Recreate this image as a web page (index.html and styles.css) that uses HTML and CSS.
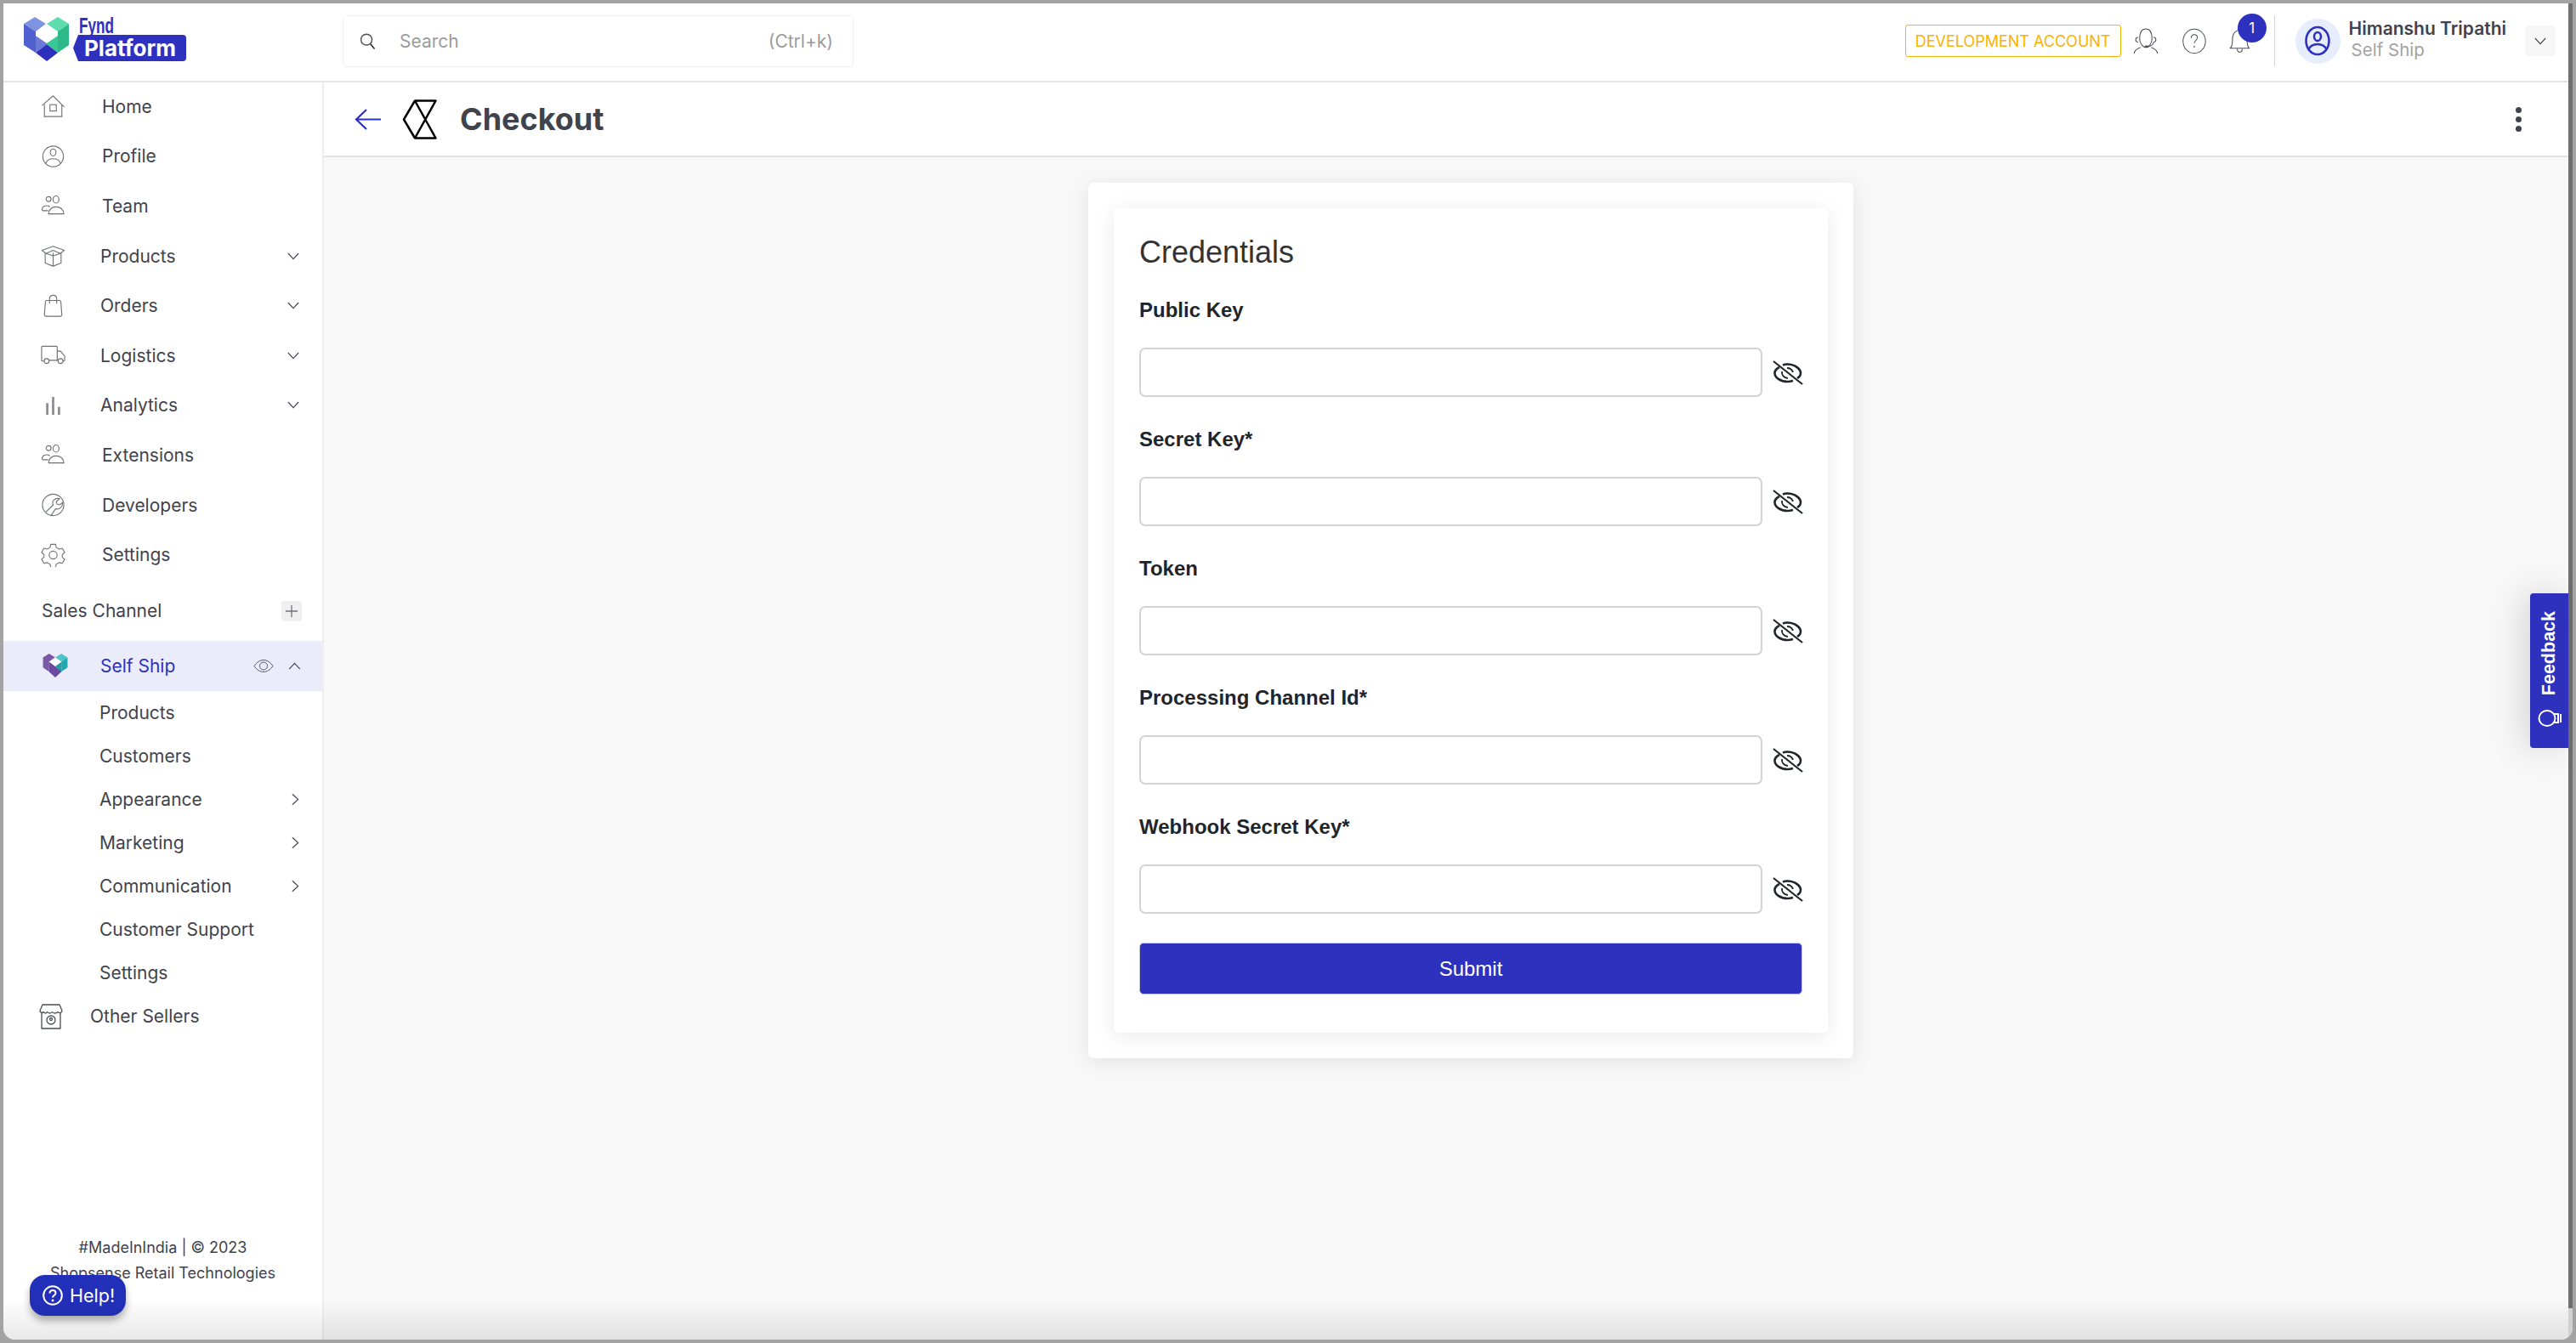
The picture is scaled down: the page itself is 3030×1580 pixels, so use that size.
FILE: index.html
```html
<!DOCTYPE html>
<html lang="en">
<head>
<meta charset="utf-8">
<title>Checkout</title>
<link rel="stylesheet" href="styles.css">
</head>
<body>
<svg class="defs" width="0" height="0" aria-hidden="true">
  <defs>
    <symbol id="people" viewBox="0 0 30 26"><g fill="none" stroke="currentColor" stroke-width="1.2"><circle cx="9.5" cy="5" r="3"/><ellipse cx="18.5" cy="5.5" rx="3.6" ry="4.4"/><path d="M2 19c-1.500-3 1-6 5-6 1.800 0 3 .4 4 1.300M2 19h7M9.500 23c0-5 3.500-8.500 9-8.500s9.500 3.500 9.500 8.500z"/></g></symbol>
    <symbol id="eye-off" viewBox="0 0 36 30"><g fill="none" stroke="#212529" stroke-width="2.600"><path d="M1 2l34 27" stroke-width="2.200"/><path d="M8 9C4 11 2.500 14 2.500 16 2.500 21 9 26 17.500 26c2.500 0 4.500-.5 6.500-1"/><path d="M12 6.500c2-.8 4-1 5.500-1C26 5.500 33 11 33 16c0 2-1.500 4.500-4 6"/><path d="M11 14c-.5 4 2 7.500 7 8M17 10c3 0 6 2 7 5" stroke-width="1.800"/></g></symbol>
    <symbol id="chev-down" viewBox="0 0 16 10"><path d="M1 1l7 7.500L15 1" fill="none" stroke="currentColor" stroke-width="1.300"/></symbol>
    <symbol id="chev-right" viewBox="0 0 10 16"><path d="M1 1l7.500 7L1 15" fill="none" stroke="currentColor" stroke-width="1.300"/></symbol>
  </defs>
</svg>
<div class="window">
  <div class="app">
    <header class="topbar">
      <div class="brand">
        <svg class="brand-mark" viewBox="0 0 54 53" aria-hidden="true">
          <path d="M13 0L26 8 14 17 0 8z" fill="#7f93e3"/>
          <path d="M0 8L14 17V42L0 33z" fill="#5060cf"/>
          <path d="M14 22L27 31V32L14 42z" fill="#6a7ad6"/>
          <path d="M40 0L53 8 40 17 27 8z" fill="#5fdcae"/>
          <path d="M53 8V33L40 42V17z" fill="#2fb98a"/>
          <path d="M27 31L40 22V42L27 32z" fill="#38c795"/>
          <path d="M14 42L27 32 40 42 27 52z" fill="#2e30bd"/>
          <path d="M27 13L39 22 27 30 14 22z" fill="#fff"/>
        </svg>
        <div class="brand-words">
          <span class="brand-fynd">Fynd</span>
          <span class="brand-tag">Platform</span>
        </div>
      </div>
      <div class="search">
        <svg class="search-icon" viewBox="0 0 20 22" aria-hidden="true"><circle cx="8.500" cy="8.500" r="6.800" fill="none" stroke="#4a4d55" stroke-width="1.500"/><path d="M13.500 14l5 6" stroke="#33363d" stroke-width="1.800"/></svg>
        <span class="search-text">Search</span>
        <span class="search-key">(Ctrl+k)</span>
      </div>
      <div class="top-actions">
        <span class="dev-badge">DEVELOPMENT ACCOUNT</span>
        <svg class="top-icon" viewBox="0 0 32 34" aria-hidden="true"><g fill="none" stroke="#4a4d55" stroke-width="1.100"><path d="M8 14C8 5 11 1 16 1s8 4 8 13c0 5-4 11-8 11S8 19 8 14z"/><path d="M6 12c-2 0-3 1-3 3s1 3 3 3M26 12c2 0 3 1 3 3 0 2-1 3-3 3M26 18c0 3-3 5-7 6"/><path d="M1 33c0-4 3-6 8-8M31 33c0-4-3-6-8-8"/></g><ellipse cx="17" cy="24" rx="3" ry="1.500" fill="#4a4d55"/></svg>
        <svg class="top-icon help-icon" viewBox="0 0 32 34" aria-hidden="true"><ellipse cx="16" cy="17" rx="14.500" ry="15.500" fill="none" stroke="#4a4d55" stroke-width="1.100"/><path d="M12 13c0-3 2-4.500 4-4.500s4 1.500 4 4c0 3-4 3.500-4 7" fill="none" stroke="#4a4d55" stroke-width="1.100"/><circle cx="16" cy="24" r="1" fill="#4a4d55"/></svg>
        <div class="bell">
          <svg class="bell-icon" viewBox="0 0 26 30" aria-hidden="true"><path d="M1 24c2-1 3-3 3-9C4 7 7 2 13 2s9 5 9 13c0 6 1 8 3 9z M10 25c0 3 1.500 4 3 4s3-1 3-4" fill="none" stroke="#4a4d55" stroke-width="1.100"/></svg>
          <span class="bell-count">1</span>
        </div>
        <span class="top-divider"></span>
        <div class="avatar">
          <svg viewBox="0 0 30 36" aria-hidden="true"><g fill="none" stroke="#2e31be" stroke-width="2.600"><ellipse cx="15" cy="18" rx="13.500" ry="16"/><ellipse cx="15" cy="13" rx="4" ry="5"/><path d="M4 29c2-5 6-7 11-7s9 2 11 7"/></g></svg>
        </div>
        <div class="user">
          <span class="user-name">Himanshu Tripathi</span>
          <span class="user-org">Self Ship</span>
        </div>
        <span class="user-toggle"><svg class="chev" viewBox="0 0 16 10" aria-hidden="true"><use href="#chev-down"/></svg></span>
      </div>
    </header>

    <div class="body-row">
      <aside class="sidebar">
        <nav class="nav">
          <a class="nav-row"><svg class="nav-icon" viewBox="0 0 30 30" aria-hidden="true"><g fill="none" stroke="currentColor" stroke-width="1.200"><path d="M1 14L15 2l14 14M4 12.500V28h22V12.500"/><rect x="11" y="13" width="8" height="8"/></g></svg><span class="nav-label">Home</span></a>
          <a class="nav-row"><svg class="nav-icon" viewBox="0 0 30 30" aria-hidden="true"><g fill="none" stroke="currentColor" stroke-width="1.200"><circle cx="15" cy="15" r="13"/><ellipse cx="15" cy="10" rx="3.600" ry="4.400"/><path d="M5.500 24c1.500-4 5-6 9.500-6s8 2 9.500 6"/></g></svg><span class="nav-label">Profile</span></a>
          <a class="nav-row"><svg class="nav-icon" aria-hidden="true"><use href="#people"/></svg><span class="nav-label">Team</span></a>
          <a class="nav-row"><svg class="nav-icon" viewBox="0 0 30 30" aria-hidden="true"><g fill="none" stroke="currentColor" stroke-width="1.200" stroke-linejoin="round"><path d="M15 3L1 8l5 4 9-4 9 4 5-4zM5 11v13l10 4 10-4V11M15 11v17M15 8l-9 4 9 3 9-3z"/></g></svg><span class="nav-label narrow">Products</span><svg class="chev" viewBox="0 0 16 10" aria-hidden="true"><use href="#chev-down"/></svg></a>
          <a class="nav-row"><svg class="nav-icon" viewBox="0 0 30 30" aria-hidden="true"><g fill="none" stroke="currentColor" stroke-width="1.200"><path d="M7 8h16q1.500 0 1.700 1.500L26 26q0 2-2 2H6q-2 0-2-2L5.300 9.500Q5.500 8 7 8z"/><path d="M10.500 12V6q0-4.500 4.500-4.500T19.500 6v6"/></g></svg><span class="nav-label narrow">Orders</span><svg class="chev" viewBox="0 0 16 10" aria-hidden="true"><use href="#chev-down"/></svg></a>
          <a class="nav-row"><svg class="nav-icon" viewBox="0 0 30 26" aria-hidden="true"><g fill="none" stroke="currentColor" stroke-width="1.200"><path d="M4 20H2q-1 0-1-1V3q0-1 1-1h17q1 0 1 1v16H10M20 8h4l5 6v5q0 1-1 1h-1"/><circle cx="7" cy="20" r="3"/><circle cx="24" cy="20" r="3"/></g></svg><span class="nav-label narrow">Logistics</span><svg class="chev" viewBox="0 0 16 10" aria-hidden="true"><use href="#chev-down"/></svg></a>
          <a class="nav-row"><svg class="nav-icon bars" viewBox="0 0 30 24" aria-hidden="true"><path d="M6 9h3v15H6zM13.500 1h3v23h-3zM21 14h3v10h-3z" fill="#8b8d92"/></svg><span class="nav-label narrow">Analytics</span><svg class="chev" viewBox="0 0 16 10" aria-hidden="true"><use href="#chev-down"/></svg></a>
          <a class="nav-row"><svg class="nav-icon" aria-hidden="true"><use href="#people"/></svg><span class="nav-label">Extensions</span></a>
          <a class="nav-row"><svg class="nav-icon" viewBox="0 0 30 30" aria-hidden="true"><g fill="none" stroke="currentColor" stroke-width="1.200"><circle cx="15" cy="15" r="13.500"/><path d="M6 24l9-9c-2-5 2-9 8-8l-4 4 1 3 3 1 4-3c0 6-4 9-9 8l-6 9"/></g></svg><span class="nav-label">Developers</span></a>
          <a class="nav-row"><svg class="nav-icon" viewBox="0 0 30 30" aria-hidden="true"><g fill="none" stroke="currentColor" stroke-width="1.200" stroke-linejoin="round"><path d="M12 1.500h6l1 4 3.500 2 4-1 3 5-3 3v3l3 3-3 5-4-1-3.500 2-1 4h-6l-1-4-3.500-2-4 1-3-5 3-3v-3l-3-3 3-5 4 1 3.500-2z"/><circle cx="15" cy="15" r="5"/></g></svg><span class="nav-label">Settings</span></a>
        </nav>

        <div class="channel-head">
          <span>Sales Channel</span>
          <span class="channel-add"><svg viewBox="0 0 14 14" aria-hidden="true"><path d="M7 0v14M0 7h14" stroke="#6f7177" stroke-width="1.300"/></svg></span>
        </div>

        <a class="channel-active">
          <svg class="channel-logo" viewBox="0 0 54 54" aria-hidden="true">
            <path d="M14 2L27 10 14 19 1 10zM1 10L14 19V40L1 31z" fill="#7b57a8"/>
            <path d="M14 19L27 28V50L14 40z" fill="#6a4a9e"/>
            <path d="M40 2L53 10 40 19 27 10z" fill="#4fc4c8"/>
            <path d="M53 10V31L40 40V19z" fill="#1fa7ab"/>
            <path d="M27 28L40 19V40L27 50z" fill="#2a9aa8"/>
            <path d="M14 40L27 30 40 40 27 52z" fill="#6b4aa0"/>
            <path d="M27 10L40 19 27 29 14 19z" fill="#fff"/>
          </svg>
          <span class="nav-label active-label">Self Ship</span>
          <svg class="channel-eye" viewBox="0 0 24 16" aria-hidden="true"><g fill="none" stroke="#55585f" stroke-width="1"><path d="M1 8c3-4.500 7-7 11-7s8 2.500 11 7c-3 4.500-7 7-11 7S4 12.500 1 8z"/><circle cx="12" cy="8" r="4.500"/></g></svg>
          <svg class="chev up" viewBox="0 0 16 10" aria-hidden="true"><path d="M1 9l7-7.500L15 9" fill="none" stroke="currentColor" stroke-width="1.300"/></svg>
        </a>

        <div class="subnav">
          <a class="sub-row"><span class="nav-label">Products</span></a>
          <a class="sub-row"><span class="nav-label">Customers</span></a>
          <a class="sub-row"><span class="nav-label">Appearance</span><svg class="chev-r" viewBox="0 0 10 16" aria-hidden="true"><use href="#chev-right"/></svg></a>
          <a class="sub-row"><span class="nav-label">Marketing</span><svg class="chev-r" viewBox="0 0 10 16" aria-hidden="true"><use href="#chev-right"/></svg></a>
          <a class="sub-row"><span class="nav-label">Communication</span><svg class="chev-r" viewBox="0 0 10 16" aria-hidden="true"><use href="#chev-right"/></svg></a>
          <a class="sub-row"><span class="nav-label">Customer Support</span></a>
          <a class="sub-row"><span class="nav-label">Settings</span></a>
        </div>

        <a class="sellers-row">
          <svg class="sellers-icon" viewBox="0 0 28 30" aria-hidden="true"><g fill="none" stroke="#4a4d55" stroke-width="1.300" stroke-linejoin="round"><path d="M4 1h20l3 7q0 2-2 2.500-2 .5-3-1-1.500 1.500-3.500 1.500t-3-1.500q-1 1.500-3 1.500t-3-1.500Q8 12 6.500 10.500T3.500 10.500Q1 10 1 8z"/><path d="M3 11v18h22V11"/><circle cx="14" cy="19" r="5"/><circle cx="14" cy="18" r="1.500"/></g></svg>
          <span class="nav-label">Other Sellers</span>
        </a>

        <footer class="side-foot">
          <p>#MadeInIndia | © 2023</p>
          <p>Shopsense Retail Technologies</p>
        </footer>
        <button class="help-btn" type="button">
          <svg viewBox="0 0 24 24" aria-hidden="true"><circle cx="12" cy="12" r="10.800" fill="none" stroke="#fff" stroke-width="2"/><path d="M8.500 9.500c0-2.300 1.600-3.500 3.500-3.500s3.500 1.200 3.500 3.200c0 2.800-3.500 2.800-3.500 5.300" fill="none" stroke="#fff" stroke-width="2"/><circle cx="12" cy="18" r="1.400" fill="#fff"/></svg>
          Help!
        </button>
      </aside>

      <main class="main">
        <div class="page-head">
          <svg class="back" viewBox="0 0 31 25" aria-hidden="true"><path d="M31 12.500H2M14 1L2 12.500 14 24" fill="none" stroke="#2e31be" stroke-width="2.200"/></svg>
          <svg class="gateway" viewBox="0 0 41 47" aria-hidden="true"><path d="M15 1.500H39.500L15 45.500H39.500L15 1.500 2 23.500 15 45.500" fill="none" stroke="#000" stroke-width="2.500" stroke-linejoin="round"/></svg>
          <h1>Checkout</h1>
          <span class="kebab"><i></i><i></i><i></i></span>
        </div>
        <div class="content">
          <section class="outer-card">
            <form class="inner-card">
              <h2>Credentials</h2>
              <div class="field"><label>Public Key</label><div class="field-line"><input type="text"><svg class="eye" aria-hidden="true"><use href="#eye-off"/></svg></div></div>
              <div class="field"><label>Secret Key*</label><div class="field-line"><input type="text"><svg class="eye" aria-hidden="true"><use href="#eye-off"/></svg></div></div>
              <div class="field"><label>Token</label><div class="field-line"><input type="text"><svg class="eye" aria-hidden="true"><use href="#eye-off"/></svg></div></div>
              <div class="field"><label>Processing Channel Id*</label><div class="field-line"><input type="text"><svg class="eye" aria-hidden="true"><use href="#eye-off"/></svg></div></div>
              <div class="field"><label>Webhook Secret Key*</label><div class="field-line"><input type="text"><svg class="eye" aria-hidden="true"><use href="#eye-off"/></svg></div></div>
              <button class="submit" type="button">Submit</button>
            </form>
          </section>
        </div>
        <div class="feedback">
          <span>Feedback</span>
          <svg viewBox="0 0 28 22" aria-hidden="true"><g fill="none" stroke="#fff" stroke-width="2"><ellipse cx="11" cy="11" rx="9.500" ry="9"/><path d="M19 6h5v10h-5M27 6v10"/></g></svg>
        </div>
      </main>
    </div>
  </div>
  <div class="scrollbar"><span class="scroll-thumb"></span></div>
  <div class="bottom-fade"></div>
</div>
</body>
</html>
```

FILE: styles.css
```css
* { box-sizing: border-box; }
html, body { margin: 0; height: 100%; }
body {
  background: #a3a3a3;
  padding: 4px;
  font-family: Inter, "Liberation Sans", sans-serif;
  color: #41434c;
  overflow: hidden;
}
.defs { position: absolute; }
.window {
  position: relative;
  height: 1572px;
  background: #fff;
  display: flex;
  border-radius: 0 0 14px 14px;
  overflow: hidden;
}
.app { flex: 1; min-width: 0; display: flex; flex-direction: column; }

/* top bar */
.topbar {
  flex: 0 0 93px;
  display: flex;
  align-items: center;
  border-bottom: 2px solid #e6e6e6;
  padding-right: 15px;
}
.brand { width: 400px; padding-left: 24px; margin-bottom: 7px; display: flex; gap: 4px; align-items: center; flex: none; }
.brand-mark { width: 54px; height: 53px; }
.brand-words { display: flex; flex-direction: column; align-items: flex-start; }
.brand-fynd {
  font: 700 26px/21px "Liberation Sans Narrow", "Liberation Sans", sans-serif;
  color: #2e31be;
  margin-left: 7px;
  transform: scaleX(.66);
  transform-origin: left;
}
.brand-tag {
  background: #2e31be;
  color: #fff;
  font: 700 26px/31px Inter, "Liberation Sans", sans-serif;
  padding: 0 9px 0 13px;
  width: 133px;
  height: 31px;
  white-space: nowrap;
  border-radius: 0 4px 4px 0;
  clip-path: polygon(6px 0, 100% 0, 100% 100%, 6px 100%, 0 50%);
}
.search {
  width: 601px;
  height: 61px;
  margin-top: -2px;
  margin-left: -1px;
  border: 1px solid #efefef;
  border-radius: 5px;
  display: flex;
  align-items: center;
  padding: 0 23px 0 19px;
  flex: none;
}
.search-icon { width: 19px; height: 22px; }
.search-text { margin-left: 28px; font-size: 21px; color: #9b9b9b; }
.search-key { margin-left: auto; font-size: 21px; color: #9b9b9b; }
.top-actions { margin-left: auto; margin-bottom: 3px; display: flex; align-items: center; }
.dev-badge {
  border: 1px solid #fdb100;
  border-radius: 3px;
  color: #fdb100;
  font-size: 18px;
  height: 38px;
  line-height: 38px;
  width: 254px;
  text-align: center;
  white-space: nowrap;
}
.top-icon { width: 30px; height: 31px; margin-left: 14px; }
.help-icon { margin-left: 27px; }
.bell { position: relative; width: 25px; height: 30px; margin-left: 26px; }
.bell-icon { width: 25px; height: 30px; display: block; }
.bell-count {
  position: absolute;
  left: 10px;
  top: -17px;
  width: 34px;
  height: 34px;
  border-radius: 50%;
  background: #2e31be;
  color: #fff;
  font-size: 17px;
  line-height: 34px;
  text-align: center;
}
.top-divider { width: 1px; height: 60px; background: #d4d4d4; margin-left: 28px; }
.avatar {
  width: 53px;
  height: 53px;
  border-radius: 50%;
  background: #e7edfd;
  margin-left: 24px;
  display: flex;
  align-items: center;
  justify-content: center;
}
.avatar svg { width: 30px; height: 36px; }
.user { display: flex; flex-direction: column; margin-left: 10px; margin-bottom: 5px; white-space: nowrap; }
.user-name { font-size: 21px; font-weight: 600; line-height: 25px; }
.user-org { font-size: 20.500px; line-height: 25px; color: #a3a3a3; margin-left: 3px; }
.user-toggle {
  width: 36px;
  height: 36px;
  margin-left: 22px;
  background: #f7f7f7;
  border-radius: 5px;
  display: flex;
  align-items: center;
  justify-content: center;
}

/* page body */
.body-row { flex: 1; min-height: 0; display: flex; }
.sidebar {
  position: relative;
  width: 377px;
  flex: none;
  display: flex;
  flex-direction: column;
  background: #fff;
  border-right: 2px solid #eeeeee;
}
.nav { display: flex; flex-direction: column; margin-top: -1px; }
.nav-row {
  height: 58.6px;
  display: flex;
  align-items: center;
  padding: 0 27px 0 44px;
  color: #6f7177;
}
.nav-icon { width: 29px; height: 28px; flex: none; }
.nav-icon.bars { height: 22px; }
.nav-label { font-size: 21px; color: #41434c; white-space: nowrap; }
.nav-row .nav-label { margin-left: 43px; }
.nav-row .nav-label.narrow { margin-left: 41px; }
.chev { width: 14px; height: 9px; color: #41434c; margin-left: auto; flex: none; }
.user-toggle .chev { margin: 0; }
.chev-r { width: 9px; height: 15px; color: #41434c; margin-left: auto; flex: none; }

.channel-head {
  height: 36px;
  margin-top: 19px;
  padding: 0 24px 0 45px;
  display: flex;
  align-items: center;
  justify-content: space-between;
  font-size: 21px;
  white-space: nowrap;
}
.channel-add {
  width: 24px;
  height: 24px;
  background: #f0f0f0;
  border-radius: 3px;
  display: flex;
  align-items: center;
  justify-content: center;
}
.channel-add svg { width: 14px; height: 14px; }
.channel-active {
  height: 59px;
  margin-top: 17px;
  background: #eaecf9;
  display: flex;
  align-items: center;
  padding: 0 25px 0 46px;
}
.channel-logo { width: 30px; height: 30px; flex: none; }
.active-label { margin-left: 38px; color: #2e31be; }
.channel-eye { width: 24px; height: 17px; margin-left: auto; }
.chev.up { margin-left: 17px; width: 15px; height: 9px; }

.subnav { display: flex; flex-direction: column; }
.sub-row {
  height: 51px;
  display: flex;
  align-items: center;
  padding: 0 27px 0 113px;
}
.sellers-row { display: flex; align-items: center; height: 52px; padding-left: 42px; }
.sellers-icon { width: 28px; height: 30px; flex: none; }
.sellers-row .nav-label { margin-left: 32px; }

.side-foot { margin-top: auto; padding-bottom: 63px; text-align: center; font-size: 18px; line-height: 30px; }
.side-foot p { margin: 0; }
.help-btn {
  position: absolute;
  left: 31px;
  top: 1403px;
  width: 113px;
  height: 48px;
  border: 0;
  border-radius: 18px;
  background: #222fb8;
  color: #fff;
  font: 21.500px Inter, sans-serif;
  display: flex;
  align-items: center;
  gap: 8px;
  padding: 0 0 0 15px;
  box-shadow: 0 6px 8px rgba(0,0,0,.3);
}
.help-btn svg { width: 24px; height: 24px; flex: none; }

.main { flex: 1; min-width: 0; display: flex; flex-direction: column; position: relative; }
.page-head {
  flex: 0 0 88px;
  background: #fff;
  border-bottom: 2px solid #e3e3e3;
  display: flex;
  align-items: center;
  padding: 0 55px 0 36px;
}
.back { width: 31px; height: 25px; flex: none; }
.gateway { width: 41px; height: 47px; margin-left: 25px; flex: none; }
.page-head h1 { margin: 0 0 0 27px; font: 700 36px/1 Inter, "Liberation Sans", sans-serif; color: #41434c; }
.kebab { margin-left: auto; display: flex; flex-direction: column; gap: 4px; }
.kebab i { width: 7px; height: 7px; border-radius: 50%; background: #41434c; }

.content { flex: 1; background: #f8f8f8; padding-top: 30px; display: flex; justify-content: center; align-items: flex-start; }
.outer-card {
  background: #fff;
  border-radius: 6px;
  padding: 30px;
  width: 900px;
  margin-left: 58px;
  box-shadow: 0 4px 24px rgba(0,0,0,.09);
}
.inner-card {
  background: #fff;
  border-radius: 6px;
  padding: 30px;
  height: 970px;
  box-shadow: 0 4px 24px rgba(0,0,0,.09);
  display: flex;
  flex-direction: column;
  font-family: "Liberation Sans", sans-serif;
}
.inner-card h2 { margin: 0 0 14px; font: 400 36px/44px "Liberation Sans", sans-serif; color: #333; }
.field { display: flex; flex-direction: column; height: 152px; padding-top: 18px; flex: none; }
.field label { font: 700 24px/28px "Liberation Sans", sans-serif; color: #212529; }
.field-line { display: flex; align-items: center; margin-top: 30px; }
.field-line input {
  width: 733px;
  height: 58px;
  border: 2px solid #d4d4d4;
  border-radius: 7px;
  background: #fff;
  outline: none;
  flex: none;
}
.eye { width: 36px; height: 30px; margin-left: 12px; flex: none; }
.submit {
  width: 780px;
  height: 61px;
  margin-top: 16px;
  flex: none;
  background: #2e31be;
  border: 1px solid #c9c9d6;
  border-radius: 5px;
  color: #fff;
  font: 24px "Liberation Sans", sans-serif;
}
.feedback {
  position: absolute;
  right: 0;
  top: 601px;
  width: 45px;
  height: 182px;
  background: #2e31be;
  border-radius: 4px 0 0 4px;
  box-shadow: -8px 0 40px rgba(0,0,0,.14);
  display: flex;
  flex-direction: column;
  align-items: center;
  justify-content: flex-end;
  gap: 16px;
  padding-bottom: 24px;
  color: #fff;
}
.feedback span {
  writing-mode: vertical-rl;
  transform: rotate(180deg);
  font: 700 21.500px/1 "Liberation Sans", sans-serif;
}
.feedback svg { width: 28px; height: 22px; }

.scrollbar { width: 5px; flex: none; background: #d0d0d0; display: flex; }
.scroll-thumb { width: 100%; height: calc(100% - 37px); background: #6f6f6f; }
.bottom-fade {
  position: absolute;
  left: 0;
  right: 5px;
  bottom: 0;
  height: 48px;
  background: linear-gradient(rgba(0,0,0,0), rgba(0,0,0,.09));
  pointer-events: none;
}
```
